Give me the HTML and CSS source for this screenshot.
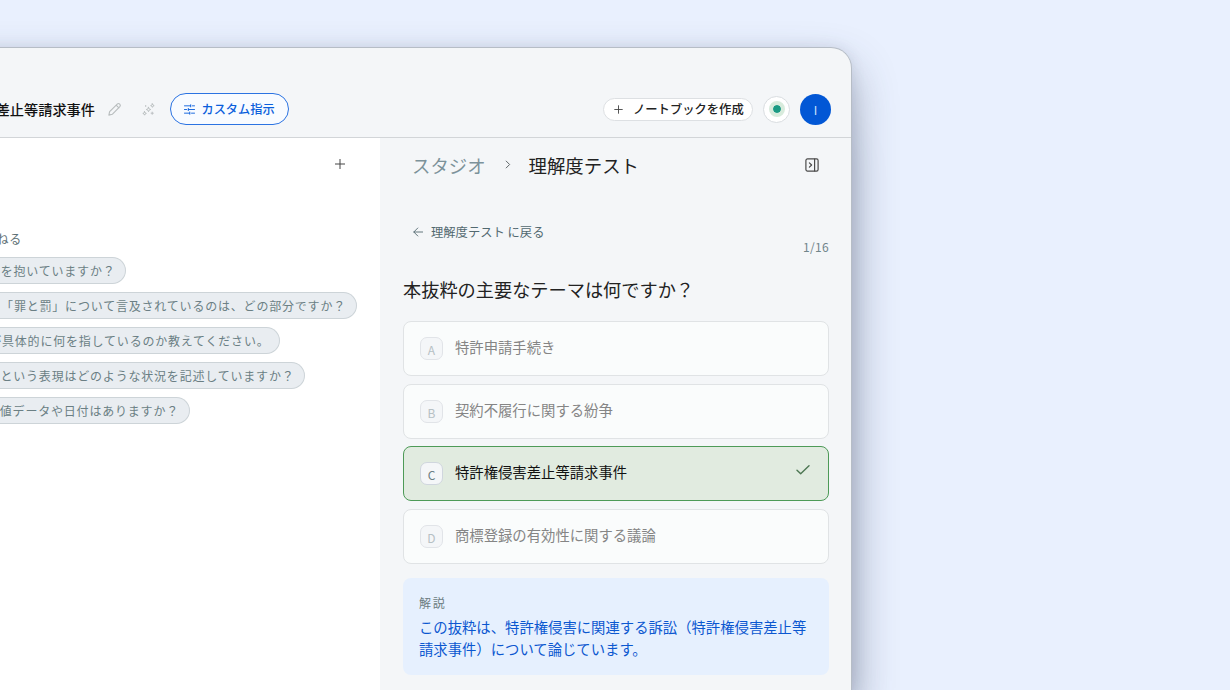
FILE: index.html
```html
<!DOCTYPE html>
<html lang="ja">
<head>
<meta charset="utf-8">
<title>理解度テスト</title>
<link rel="stylesheet" href="styles.css">
</head>
<body>
<div class="window">
  <header class="topbar">
    <div class="title">差止等請求事件</div>
    <svg class="pencil" viewBox="0 0 16 16"><path d="M2 14l.8-3.7 8.1-8.1c1.8-1.6 4.4.9 2.8 2.8l-8.1 8.1zM9.8 3.4l2.8 2.8"/></svg>
    <svg class="sparkle" viewBox="0 0 14 14"><path d="M7 4.6l.7 1.7 1.7.7-1.7.7L7 9.4l-.7-1.7L4.6 7l1.7-.7z"/><path d="M11.2.9l.6 1.3 1.3.6-1.3.6-.6 1.3-.6-1.3-1.3-.6 1.3-.6zM2.8 9.3l.6 1.3 1.3.6-1.3.6-.6 1.3-.6-1.3-1.3-.6 1.3-.6zM4 2.6v1.2M11 9.8v2.4M9.8 11h2.4"/></svg>
    <button class="custom"><svg class="sliders" viewBox="0 0 12 12"><path d="M.5 2h6.8M9.2 2h2.3M7.3.8v2.4M.5 6h2.3M4.7 6h6.8M4.7 4.8v2.4M.5 10h5.8M8.2 10h3.3M6.3 8.8v2.4"/></svg>カスタム指示</button>
    <button class="create"><svg class="plus" viewBox="0 0 10 10"><path d="M5 .8v8.4M.8 5h8.4"/></svg>ノートブックを作成</button>
    <div class="status"><span class="dot"></span></div>
    <div class="avatar">I</div>
  </header>
  <main class="body">
    <section class="chat">
      <div class="chat-head"><svg class="plus big" viewBox="0 0 10 10"><path d="M5 .2v9.6M.2 5h9.6"/></svg></div>
      <div class="ask">ねる</div>
      <div class="chips">
        <div class="chip c1">者を抱いていますか？</div>
        <div class="chip c2">「罪と罰」について言及されているのは、どの部分ですか？</div>
        <div class="chip c3">が具体的に何を指しているのか教えてください。</div>
        <div class="chip c4">という表現はどのような状況を記述していますか？</div>
        <div class="chip c5">数値データや日付はありますか？</div>
      </div>
    </section>
    <section class="studio">
      <div class="crumbs">
        <span class="parent">スタジオ</span>
        <svg class="chev" viewBox="0 0 6 10"><path d="M1 1.2L4.8 5 1 8.8"/></svg>
        <span class="current">理解度テスト</span>
        <svg class="panel" viewBox="0 0 14 14"><rect x=".9" y=".9" width="12.2" height="12.2" rx="1.6"/><path d="M9.6 1v12M4.4 4.8L6.6 7 4.4 9.2"/></svg>
      </div>
      <div class="back"><svg class="arrow" viewBox="0 0 10 10"><path d="M9.8 5H.8M4.8 1L.8 5l4 4"/></svg>理解度テスト に戻る</div>
      <div class="count">1/16</div>
      <h1 class="question">本抜粋の主要なテーマは何ですか？</h1>
      <div class="options">
        <div class="option"><span class="key">A</span><span class="label">特許申請手続き</span></div>
        <div class="option"><span class="key">B</span><span class="label">契約不履行に関する紛争</span></div>
        <div class="option correct"><span class="key">C</span><span class="label">特許権侵害差止等請求事件</span><svg class="check" viewBox="0 0 14 10"><path d="M1 5.2l3.7 3.6L13 .8"/></svg></div>
        <div class="option"><span class="key">D</span><span class="label">商標登録の有効性に関する議論</span></div>
      </div>
      <div class="explain">
        <div class="explain-head">解説</div>
        <p class="explain-text">この抜粋は、特許権侵害に関連する訴訟（特許権侵害差止等請求事件）について論じています。</p>
      </div>
    </section>
  </main>
</div>
</body>
</html>
```
FILE: styles.css
```css
* { box-sizing: border-box; }
body {
  margin: 0;
  width: 1230px;
  height: 690px;
  overflow: hidden;
  background: #e9f0fe;
  font-family: "Noto Sans CJK JP", sans-serif;
  padding-top: 47px;
}
svg { fill: none; stroke: currentColor; stroke-linecap: round; stroke-linejoin: round; flex: none; }
button { font: inherit; margin: 0; }
.window {
  width: 953px;
  height: 643px;
  margin-left: -101px;
  padding-left: 100px;
  background: #f4f6f8;
  border: 1px solid #b6bdc6;
  border-bottom: 0;
  border-top-right-radius: 21px;
  box-shadow: 0 22px 44px rgba(50, 62, 88, .42), 0 0 14px rgba(50, 62, 88, .1), 0 90px 40px rgba(50, 62, 88, .1);
}
.topbar {
  height: 90px;
  padding: 33px 20px 0 0;
  display: flex;
  align-items: center;
  border-bottom: 1.5px solid #d2d5d8;
}
.title {
  width: 95px;
  display: flex;
  justify-content: flex-end;
  white-space: nowrap;
  font-size: 14.2px;
  font-weight: 500;
  color: #111;
}
.pencil { width: 15px; height: 15px; margin-left: 12px; color: #b8bdbe; stroke-width: 1.2; }
.sparkle { width: 13px; height: 13px; margin-left: 20px; color: #b8bdbe; stroke-width: 1; }
.custom {
  width: 119px;
  height: 32px;
  margin-left: 15px;
  padding: 0 0 0 13px;
  display: flex;
  align-items: center;
  gap: 6.5px;
  border: 1px solid #2b73e2;
  border-radius: 16px;
  background: #f8fbff;
  color: #0b5fdc;
  font-size: 12.2px;
  font-weight: 500;
  white-space: nowrap;
}
.sliders { width: 11px; height: 11px; stroke-width: 1; }
.create {
  width: 150px;
  height: 23px;
  margin-left: auto;
  padding: 0 0 0 10px;
  display: flex;
  align-items: center;
  gap: 10px;
  border: 1px solid #dde0e3;
  border-radius: 12px;
  background: #fff;
  color: #222;
  font-size: 12.3px;
  font-weight: 500;
  white-space: nowrap;
}
.plus { width: 9px; height: 9px; stroke-width: 1; color: #444; }
.plus.big { width: 10px; height: 10px; }
.status {
  width: 27px;
  height: 27px;
  margin-left: 10px;
  border: 1px solid #d9dde0;
  border-radius: 50%;
  background: #fff;
  display: grid;
  place-items: center;
}
.dot { width: 16px; height: 16px; border: 4px solid #d8ebdc; border-radius: 50%; background: #1b9a83; background-clip: padding-box; }
.avatar {
  width: 31px;
  height: 31px;
  margin-left: 10px;
  border-radius: 50%;
  background: #0257d5;
  color: #d4e4fb;
  font-size: 12px;
  display: grid;
  place-items: center;
}
.body { display: flex; height: 552px; }
.chat { width: 380px; background: #fff; }
.chat-head { padding: 21px 35px 0 0; height: 88px; display: flex; justify-content: flex-end; }
.ask {
  width: 22px;
  height: 24px;
  line-height: 25px;
  display: flex;
  justify-content: flex-end;
  white-space: nowrap;
  font-size: 12px;
  letter-spacing: .8px;
  color: #5d7075;
}
.chips { display: flex; flex-direction: column; gap: 8px; padding-top: 7px; }
.chip {
  height: 27px;
  padding-right: 9.5px;
  display: flex;
  align-items: center;
  justify-content: flex-end;
  white-space: nowrap;
  border: 1px solid #cdd4d8;
  border-left: 0;
  border-radius: 0 14px 14px 0;
  background: #e9edf1;
  color: #6b7f84;
  font-size: 12px;
  letter-spacing: .8px;
}
.c1 { width: 126px; }
.c2 { width: 356.5px; }
.c3 { width: 280px; }
.c4 { width: 305px; }
.c5 { width: 189.5px; }
.studio { flex: 1; padding: 0 22px 0 23px; }
.crumbs { height: 53px; display: flex; align-items: center; padding: 0 10px 0 9px; font-size: 18.4px; line-height: 28px; }
.parent { color: #7c929a; }
.current { color: #222; }
.chev { width: 6px; height: 9px; margin: -1px 18px 0 19px; stroke-width: 1.1; color: #5c6467; }
.panel { width: 14px; height: 14px; margin-left: auto; stroke-width: 1.2; color: #4a4a4a; }
.back {
  height: 20px;
  margin-top: 31px;
  padding-left: 10px;
  display: flex;
  align-items: center;
  gap: 8px;
  font-size: 12.3px;
  color: #526970;
}
.arrow { width: 10px; height: 10px; stroke-width: .9; }
.count { height: 20px; margin-top: -5px; line-height: 20px; text-align: right; font-size: 12px; letter-spacing: .3px; color: #70858b; }
.question { margin: 17px 0 0; height: 30px; line-height: 30px; font-size: 18.2px; font-weight: 400; color: #222; }
.options { margin-top: 17px; display: flex; flex-direction: column; gap: 7.5px; }
.option {
  height: 55px;
  display: flex;
  align-items: center;
  padding: 0 18px 0 16px;
  border: 1px solid #e0e3e5;
  border-radius: 8px;
  background: #fafcfc;
  color: #858585;
  font-size: 14.35px;
}
.key {
  width: 23px;
  height: 23px;
  margin-right: 12px;
  line-height: 23px;
  text-align: center;
  border: 1px solid #e1e4e8;
  border-radius: 7px;
  background: #f4f6f8;
  color: #b6c0c4;
  font-size: 12px;
}
.label { line-height: 22px; padding-bottom: 3px; }
.correct { border-color: #4d9a57; background: #e1ebe0; color: #111; }
.correct .key { color: #6b7f84; border-color: #d0d6de; }
.check { width: 14px; height: 10px; margin: -8px 0 0 auto; stroke-width: 1.4; color: #4c7652; }
.explain { height: 97px; margin-top: 14px; padding: 14px 16px; border-radius: 8px; background: #e6f0fe; }
.explain-head { height: 22px; line-height: 22px; font-size: 12px; letter-spacing: 1.7px; color: #6c7d81; }
.explain-text { margin: 2px 0 0; font-size: 14.35px; line-height: 22.5px; color: #0b57d0; width: 392px; }
```
